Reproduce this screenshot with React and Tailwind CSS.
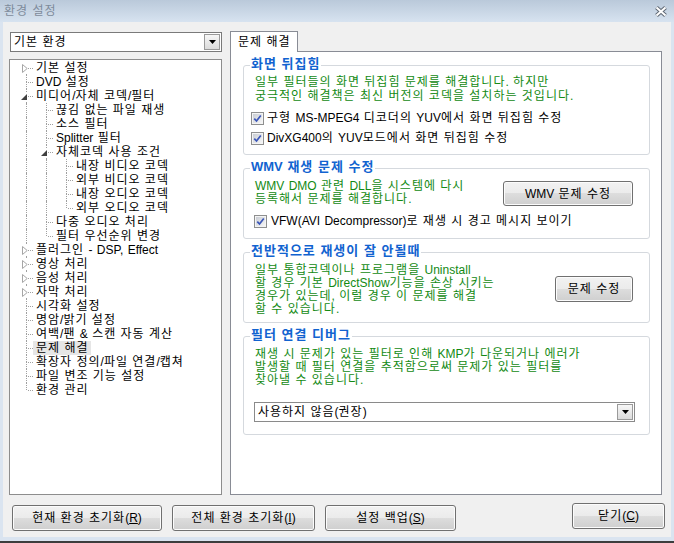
import React from 'react';

const FONT = "font-['Liberation_Sans','Noto_Sans_CJK_KR',sans-serif]";

// hangul in the reference is a little wider than Noto's, so the page gets
// 1px tracking and latin runs are put back to normal spacing
function T({ children }) {
  if (typeof children !== 'string') return children;
  return children.split(/([\x21-\x7e]+)/).map((s, i) =>
    i % 2 ? (
      <span key={i} className="tracking-normal">
        {s}
      </span>
    ) : (
      s
    ),
  );
}

function Lines({ lines }) {
  return lines.map((l, i) => (
    <React.Fragment key={i}>
      {i > 0 && <br />}
      <T>{l}</T>
    </React.Fragment>
  ));
}

const tree = [
  { label: '기본 설정', exp: 'closed' },
  { label: 'DVD 설정' },
  {
    label: '미디어/자체 코덱/필터',
    exp: 'open',
    children: [
      { label: '끊김 없는 파일 재생' },
      { label: '소스 필터' },
      { label: 'Splitter 필터' },
      {
        label: '자체코덱 사용 조건',
        exp: 'open',
        children: [
          { label: '내장 비디오 코덱' },
          { label: '외부 비디오 코덱' },
          { label: '내장 오디오 코덱' },
          { label: '외부 오디오 코덱' },
        ],
      },
      { label: '다중 오디오 처리' },
      { label: '필터 우선순위 변경' },
    ],
  },
  { label: '플러그인 - DSP, Effect', exp: 'closed' },
  { label: '영상 처리', exp: 'closed' },
  { label: '음성 처리', exp: 'closed' },
  { label: '자막 처리', exp: 'closed' },
  { label: '시각화 설정' },
  { label: '명암/밝기 설정' },
  { label: '여백/팬 & 스캔 자동 계산' },
  { label: '문제 해결', selected: true },
  { label: '확장자 정의/파일 연결/캡쳐' },
  { label: '파일 변조 기능 설정' },
  { label: '환경 관리' },
];

function flatten(nodes, guides = [], out = []) {
  nodes.forEach((n, i) => {
    const last = i === nodes.length - 1;
    out.push({ ...n, guides, last, first: guides.length === 0 && i === 0 });
    if (n.children) flatten(n.children, [...guides, !last], out);
  });
  return out;
}

function Connector({ first, last, exp }) {
  return (
    <div className="grid h-[14px] w-[17px] shrink-0">
      {!first && (
        <div className="col-start-1 row-start-1 ml-[10px] h-[7px] border-l border-dotted border-[#a0a0a0]" />
      )}
      {!last && (
        <div className="col-start-1 row-start-1 ml-[10px] mt-[7px] h-[7px] border-l border-dotted border-[#a0a0a0]" />
      )}
      <div className="col-start-1 row-start-1 ml-[12px] mt-[7px] h-0 w-[5px] self-start border-t border-dotted border-[#a0a0a0]" />
      {exp === 'closed' && (
        <span className="col-start-1 row-start-1 ml-[5px] mt-[2px] flex h-[10px] w-[7px] items-center justify-center self-start justify-self-start bg-white">
          <svg width="6" height="9" viewBox="0 0 6 9">
            <path d="M0.5 0.5 L5.2 4.5 L0.5 8.5 Z" fill="#fff" stroke="#a6a6a6" />
          </svg>
        </span>
      )}
      {exp === 'open' && (
        <span className="col-start-1 row-start-1 ml-[4px] mt-[3px] flex h-[9px] w-[8px] items-center justify-center self-start justify-self-start bg-white">
          <svg width="6" height="6" viewBox="0 0 6 6">
            <path d="M6 0 L6 6 L0 6 Z" fill="#404040" />
          </svg>
        </span>
      )}
    </div>
  );
}

function DropBtn() {
  return (
    <span className="flex h-[16px] w-[16px] shrink-0 items-center justify-center border border-[#9a9a9a] bg-gradient-to-b from-[#f7f7f7] to-[#dcdcdc]">
      <svg width="7" height="4" viewBox="0 0 7 4">
        <path d="M0 0H7L3.5 4Z" fill="#000" />
      </svg>
    </span>
  );
}

function Check() {
  return (
    <span className="flex h-[13px] w-[13px] shrink-0 items-center justify-center border border-[#8e8f8f] bg-white">
      <span className="flex h-[11px] w-[11px] items-center justify-center border border-[#f4f4f4] bg-gradient-to-br from-[#c9cdd4] to-[#f6f6f6]">
        <svg width="9" height="9" viewBox="0 0 9 9">
          <path d="M1.3 4.6 L3.5 7 L7.8 1.4" fill="none" stroke="#3b56b8" strokeWidth="1.7" />
        </svg>
      </span>
    </span>
  );
}

function CheckRow({ label, gap = 'gap-[3px]' }) {
  return (
    <div className={`flex h-[16px] items-center ${gap} text-[12px] whitespace-nowrap text-black`}>
      <Check />
      <span>
        <T>{label}</T>
      </span>
    </div>
  );
}

function Btn({ className = '', children }) {
  return (
    <div
      className={`flex shrink-0 items-center justify-center rounded-[3px] border border-[#707070] bg-[linear-gradient(#f2f2f2,#ebebeb_50%,#dddddd_50%,#cfcfcf)] text-[12px] whitespace-nowrap text-black shadow-[inset_0_0_0_1px_#fcfcfc] ${className}`}
    >
      <span>{children}</span>
    </div>
  );
}

function Group({ title, className = '', frame = '', children }) {
  return (
    <div className={`ml-[12px] flex w-[407px] flex-col ${className}`}>
      <span className="relative z-10 -mb-[6px] ml-[7px] self-start bg-white px-px text-[13px] leading-[14px] font-bold whitespace-nowrap text-[#1163d0]">
        <T>{title}</T>
      </span>
      <div className={`rounded-[3px] border border-[#d5d9de] ${frame}`}>{children}</div>
    </div>
  );
}

const note = 'text-[12px] leading-[13px] whitespace-nowrap text-[#138a13]';

export default function App() {
  const rows = flatten(tree);

  return (
    <div className={`flex h-[543px] w-[674px] flex-col overflow-hidden bg-[#dae4f0] tracking-[1px] ${FONT}`}>
      {/* title bar */}
      <div className="flex h-[22px] shrink-0 items-center justify-between bg-gradient-to-b from-[#bac9da] to-[#d7e3f0] pl-[4px] pr-[6px]">
        <span className="text-[12px] leading-none text-[#7e8b9b]">환경 설정</span>
        <svg width="14" height="11" viewBox="0 0 14 11">
          <path d="M2.5 1.5 L11.5 9.5 M11.5 1.5 L2.5 9.5" stroke="#5f6874" strokeWidth="4" />
          <path d="M2.5 1.5 L11.5 9.5 M11.5 1.5 L2.5 9.5" stroke="#fff" strokeWidth="2" />
        </svg>
      </div>

      <div className="mx-[3px] flex flex-1 flex-col bg-[#f0f0f0] pl-[6px]">
        <div className="flex pt-[9px]">
          {/* left: category + tree */}
          <div className="flex w-[213px] flex-col">
            <div className="mt-px ml-px flex h-[20px] w-[212px] items-center justify-between border border-[#7a7a7a] bg-white pr-px pl-[3px] text-[12px] text-black">
              <span>기본 환경</span>
              <DropBtn />
            </div>
            <div className="mt-[7px] h-[436px] border border-[#8d8d8d] bg-white pt-px pl-[6px] text-black">
              {rows.map((r) => (
                <div key={r.label} className="flex h-[14px]">
                  {r.guides.map((g, k) => (
                    <div key={k} className="h-[14px] w-[20px] shrink-0">
                      {g && <div className="ml-[10px] h-full border-l border-dotted border-[#a0a0a0]" />}
                    </div>
                  ))}
                  <Connector first={r.first} last={r.last} exp={r.exp} />
                  <span
                    className={`h-[14px] pr-[2px] pl-[3px] text-[12px] leading-[14px] whitespace-nowrap ${r.selected ? 'bg-[#e6e6e6]' : ''}`}
                  >
                    <T>{r.label}</T>
                  </span>
                </div>
              ))}
            </div>
          </div>

          {/* right: tab panel */}
          <div className="ml-[8px] flex w-[432px] flex-col">
            <div className="relative z-10 -mb-px flex h-[21px] w-[68px] items-center border border-b-0 border-[#898c95] bg-white pl-[7px] text-[12px] text-black">
              문제 해결
            </div>
            <div className="flex h-[444px] flex-col border border-[#898c95] bg-white pt-[5px]">
              <Group title="화면 뒤집힘" frame="h-[90px] pt-[9px]">
                <p className={`pl-[11px] leading-[14px] ${note}`}>
                  <Lines
                    lines={[
                      '일부 필터들의 화면 뒤집힘 문제를 해결합니다. 하지만',
                      '궁극적인 해결책은 최신 버전의 코덱을 설치하는 것입니다.',
                    ]}
                  />
                </p>
                <div className="mt-[7px] flex flex-col gap-[4px] pl-[7px]">
                  <CheckRow label="구형 MS-MPEG4 디코더의 YUV에서 화면 뒤집힘 수정" />
                  <CheckRow label="DivXG400의 YUV모드에서 화면 뒤집힘 수정" />
                </div>
              </Group>

              <Group title="WMV 재생 문제 수정" className="mt-[5px]" frame="h-[71px] pt-[11px]">
                <div className="flex items-start justify-between pr-[16px] pl-[11px]">
                  <p className={note}>
                    <Lines lines={['WMV DMO 관련 DLL을 시스템에 다시', '등록해서 문제를 해결합니다.']} />
                  </p>
                  <Btn className="mt-px h-[25px] w-[130px]">
                    <T>WMV 문제 수정</T>
                  </Btn>
                </div>
                <div className="mt-[7px] pl-[10px]">
                  <CheckRow gap="gap-[4px]" label="VFW(AVI Decompressor)로 재생 시 경고 메시지 보이기" />
                </div>
              </Group>

              <Group title="전반적으로 재생이 잘 안될때" className="mt-[5px]" frame="h-[71px] pt-[11px]">
                <div className="flex items-start justify-between pr-[16px] pl-[11px]">
                  <p className={note}>
                    <Lines
                      lines={[
                        '일부 통합코덱이나 프로그램을 Uninstall',
                        '할 경우 기본 DirectShow기능을 손상 시키는',
                        '경우가 있는데, 이럴 경우 이 문제를 해결',
                        '할 수 있습니다.',
                      ]}
                    />
                  </p>
                  <Btn className="mt-[12px] h-[26px] w-[78px]">문제 수정</Btn>
                </div>
              </Group>

              <Group title="필터 연결 디버그" className="mt-[5px]" frame="h-[99px] pt-[11px]">
                <p className={`pl-[11px] ${note}`}>
                  <Lines
                    lines={[
                      '재생 시 문제가 있는 필터로 인해 KMP가 다운되거나 에러가',
                      '발생할 때 필터 연결을 추적함으로써 문제가 있는 필터를',
                      '찾아낼 수 있습니다.',
                    ]}
                  />
                </p>
                <div className="mt-[15px] ml-[10px] flex h-[20px] w-[381px] items-center justify-between border border-[#8a8a8a] bg-white pr-px pl-[3px] text-[12px] text-black">
                  <span>
                    <T>사용하지 않음(권장)</T>
                  </span>
                  <DropBtn />
                </div>
              </Group>
            </div>
          </div>
        </div>

        {/* bottom buttons */}
        <div className="mt-[8px] flex items-start">
          <Btn className="mt-[2px] ml-[3px] h-[26px] w-[150px]">
            현재 환경 초기화<span className="tracking-normal">(<u>R</u>)</span>
          </Btn>
          <Btn className="mt-[2px] ml-[10px] h-[26px] w-[143px]">
            전체 환경 초기화<span className="tracking-normal">(<u>I</u>)</span>
          </Btn>
          <Btn className="mt-[2px] ml-[10px] h-[26px] w-[131px]">
            설정 백업<span className="tracking-normal">(<u>S</u>)</span>
          </Btn>
          <Btn className="ml-[116px] h-[26px] w-[93px]">
            닫기<span className="tracking-normal">(<u>C</u>)</span>
          </Btn>
        </div>
      </div>
      <div className="h-[4px] shrink-0" />
      <div className="h-[2px] shrink-0 bg-[#3d3d3d]" />
    </div>
  );
}
